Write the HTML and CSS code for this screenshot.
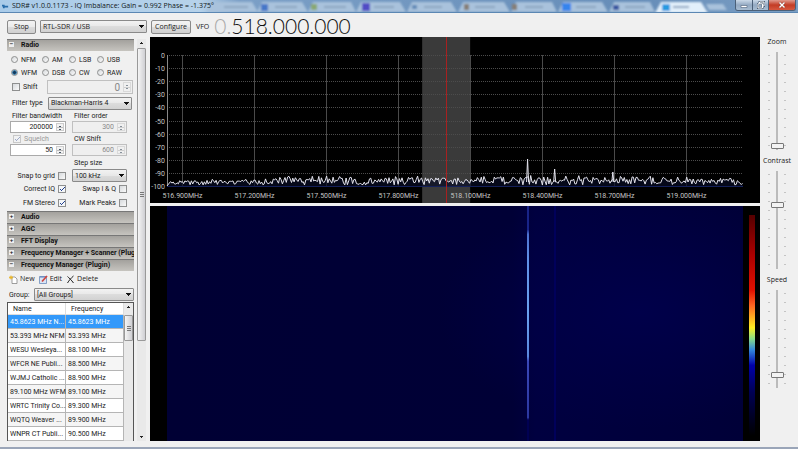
FILE: index.html
```html
<!DOCTYPE html>
<html lang="en">
<head>
<meta charset="utf-8">
<title>SDR#</title>
<link rel="stylesheet" href="styles.css">
</head>
<body>
<div class="app">
  <header class="titlebar">
    <svg class="tabs" viewBox="0 0 798 12" preserveAspectRatio="xMinYMin slice" aria-hidden="true">
      <defs><filter id="soft" x="-5%" y="-50%" width="110%" height="200%"><feGaussianBlur stdDeviation="1.3"/></filter></defs>
      <g filter="url(#soft)">
        <g fill="#a9c2dc">
          <path d="M206 12l6-10h40l6 10zM257 12l5-10h40l6 10zM308 12l5-10h38l5 10zM356 12l5-10h39l6 10zM407 12l5-10h39l6 10zM458 12l5-10h41l6 10zM511 12l5-10h36l5 10zM558 12l5-10h39l6 10zM609 12l5-10h36l5 10zM709 10l-3-6h17l4 6z"/>
        </g>
        <path fill="#e3f0fb" d="M655 13l6-11h40l7 11z"/>
        <path stroke="#8ba4c0" stroke-width="2" d="M224 7h24M275 7h22M324 7h22M374 7h20M424 7h18M475 7h20M525 7h18M576 7h20M625 7h20M673 7h16"/>
        <path fill="#4576c8" d="M261 4h7v7h-7z"/><path fill="#89a872" d="M311 4h6v6h-6z"/>
        <path fill="#514bc5" d="M362 3h8v8h-8z"/><path fill="#628ab7" d="M412 5h5v4h-5z"/>
        <path fill="#867e76" d="M464 4h5v6h-5zM512 4h5v6h-5z"/><path fill="#3684ed" d="M562 3h9v8h-9z"/>
        <path fill="#3957a0" d="M613 5h6v5h-6z"/><path fill="#279ae0" d="M662 4h8v7h-8z"/>
      </g>
    </svg>
    <svg class="logo" viewBox="0 0 8 8" aria-hidden="true"><path d="M0 2h3v1h4v2H3v1H1V4H0z" fill="#286dab"/></svg>
    <h1>SDR# v1.0.0.1173 - IQ Imbalance: Gain = 0.992 Phase = -1.375°</h1>
    <div class="winbtns">
      <button class="min" aria-label="Minimize"><svg viewBox="0 0 8 8"><path d="M1 4.500h6v2H1z" fill="#fff" stroke="#4c6078" stroke-width=".6"/></svg></button>
      <button class="max" aria-label="Restore"><svg viewBox="0 0 8 8"><path d="M2.500 2.500V1H7v4H5.500M1 2.800h4.500V7H1z" fill="none" stroke="#44566c" stroke-width="1.800"/><path d="M2.500 2.500V1H7v4H5.500M1 2.800h4.500V7H1z" fill="none" stroke="#fff"/></svg></button>
      <button class="close" aria-label="Close"><svg viewBox="0 0 8 8"><path d="M1.500 1.500l5 5M6.500 1.500l-5 5" stroke="#7c2419" stroke-width="2.400"/><path d="M1.500 1.500l5 5M6.500 1.500l-5 5" stroke="#fff" stroke-width="1.500"/></svg></button>
    </div>
  </header>

  <div class="toolbar">
    <button class="btn stop">Stop</button>
    <select class="source" aria-label="Source"><option>RTL-SDR / USB</option></select>
    <button class="btn configure">Configure</button>
    <span class="vfo-label">VFO</span>
    <output class="vfo"><span>0.</span>518.000.000</output>
  </div>

  <main class="main">
    <div class="side">
      <div class="panels">
        <h2 class="head"><button><i>−</i>Radio</button></h2>
        <form class="radio">
          <div class="modes">
            <label><input type="radio" name="mode">NFM</label><label><input type="radio" name="mode">AM</label><label><input type="radio" name="mode">LSB</label><label><input type="radio" name="mode">USB</label>
            <label><input type="radio" name="mode" checked>WFM</label><label><input type="radio" name="mode">DSB</label><label><input type="radio" name="mode">CW</label><label><input type="radio" name="mode">RAW</label>
          </div>
          <div class="line">
            <label class="shift"><input type="checkbox">Shift</label>
            <span class="spin big off"><input type="text" value="0" aria-label="Shift" disabled><b></b></span>
          </div>
          <div class="line">
            <label class="ftype" for="ftype">Filter type</label>
            <select id="ftype"><option>Blackman-Harris 4</option></select>
          </div>
          <div class="fields">
            <label for="bw">Filter bandwidth</label><label for="order">Filter order</label>
            <span class="spin"><input id="bw" type="text" value="200000"><b></b></span>
            <span class="spin off"><input id="order" type="text" value="300" disabled><b></b></span>
            <label class="squelch"><input type="checkbox" checked disabled>Squelch</label><label for="cw">CW Shift</label>
            <span class="spin"><input type="text" value="50" aria-label="Squelch level"><b></b></span>
            <span class="spin off"><input id="cw" type="text" value="600" disabled><b></b></span>
            <label class="step" for="step">Step size</label>
            <label class="check">Snap to grid<input type="checkbox"></label>
            <select id="step"><option>100 kHz</option></select>
            <label class="check">Correct IQ<input type="checkbox" checked></label><label class="check">Swap I &amp; Q<input type="checkbox"></label>
            <label class="check">FM Stereo<input type="checkbox" checked></label><label class="check">Mark Peaks<input type="checkbox"></label>
          </div>
        </form>
        <h2 class="head"><button><i>+</i>Audio</button></h2>
        <h2 class="head"><button><i>+</i>AGC</button></h2>
        <h2 class="head"><button><i>+</i>FFT Display</button></h2>
        <h2 class="head"><button><i>+</i>Frequency Manager + Scanner (Plug</button></h2>
        <h2 class="head"><button><i>−</i>Frequency Manager (Plugin)</button></h2>
        <div class="tools">
          <button><svg viewBox="0 0 9 9"><path d="M3 2h3l2 2v4.500H3z" fill="#fff" stroke="#777" stroke-width=".7"/><path d="M0 2.500h4M2 .5v4M.7 1l2.600 3M3.300 1L.7 4" stroke="#e9b62a" stroke-width=".9"/></svg>New</button>
          <button><svg viewBox="0 0 9 9"><path d="M.5 1.500h7v7h-7z" fill="#d9e5f5" stroke="#6b8cba" stroke-width=".8"/><path d="M1 2h6" stroke="#5a7fbd"/><path d="M3 6.500L8 1" stroke="#d0453e" stroke-width="1.700"/></svg>Edit</button>
          <button><svg viewBox="0 0 9 9"><path d="M1.500 1.500C3 3 5.500 5 7.500 8M7.500 1C5 3 3 5.500 1.500 8" fill="none" stroke="#222"/></svg>Delete</button>
        </div>
        <div class="group"><label for="grp">Group:</label><select id="grp"><option>[All Groups]</option></select></div>
        <div class="list">
          <table>
            <thead><tr><th>Name</th><th>Frequency</th></tr></thead>
            <tbody>
              <tr class="sel"><td>45.8623 MHz N...</td><td>45.8623 MHz</td></tr>
              <tr><td>53.393 MHz NFM</td><td>53.393 MHz</td></tr>
              <tr><td>WESU Wesleya...</td><td>88.100 MHz</td></tr>
              <tr><td>WFCR NE Publi...</td><td>88.500 MHz</td></tr>
              <tr><td>WJMJ Catholic ...</td><td>88.900 MHz</td></tr>
              <tr><td>89.100 MHz WFM</td><td>89.100 MHz</td></tr>
              <tr><td>WRTC Trinity Co...</td><td>89.300 MHz</td></tr>
              <tr><td>WQTQ Weaver ...</td><td>89.900 MHz</td></tr>
              <tr><td>WNPR CT Publi...</td><td>90.500 MHz</td></tr>
            </tbody>
          </table>
          <div class="bar short"><i class="up"></i><b></b></div>
        </div>
      </div>
      <div class="bar long"><i class="up"></i><b></b><i class="down"></i></div>
    </div>

    <div class="plots">
      <svg class="spectrum" id="spectrum"></svg>
      <div class="waterfall">
        <div class="fall"><i class="faint"></i><i class="signal"></i></div>
        <div class="scale"></div>
      </div>
    </div>

    <div class="sliders">
      <label for="zoom">Zoom</label><input id="zoom" type="range" min="0" max="100" value="1">
      <label for="contrast">Contrast</label><input id="contrast" type="range" min="0" max="100" value="66">
      <label for="speed">Speed</label><input id="speed" type="range" min="0" max="100" value="11">
    </div>
  </main>
  <footer class="edge"></footer>
</div>
<script src="script.js"></script>
</body>
</html>
```
FILE: styles.css
```css
* { box-sizing: border-box; }
body {
  margin: 0;
  background: #f0f0f0;
  color: #222;
  font: 7px/10px Roboto, "Liberation Sans", sans-serif;
}
button, input, select { font: inherit; color: inherit; margin: 0; }
button { padding: 0; border: 0; background: none; }
.app { min-height: 100vh; display: flex; flex-direction: column; }

.titlebar {
  position: relative;
  display: flex;
  align-items: center;
  gap: 3px;
  height: 13px;
  padding-left: 2px;
  border-bottom: 1px solid #5b87b3;
  background: linear-gradient(90deg, #a9cbe9 0, #b6d2ea 25%, #7b9fc6 30%, #668db8 80%, #7c9fc4);
  overflow: hidden;
}
.tabs { position: absolute; inset: 0; width: 100%; height: 100%; }
.logo { position: relative; width: 7px; height: 7px; }
.titlebar h1 { position: relative; margin: 0; flex: 1; font: 7px/12px "Open Sans", sans-serif; color: #101820; }
.winbtns { position: relative; display: flex; align-self: flex-start; margin-right: 2px; border: 1px solid #4b6078; border-top: 0; border-radius: 0 0 3px 3px; overflow: hidden; }
.winbtns button { width: 16px; height: 10px; display: flex; align-items: center; justify-content: center; background: linear-gradient(#cbd9e8, #93a9c2 50%, #a8bdd2); }
.winbtns button + button { border-left: 1px solid #4b6078; }
.winbtns .close { width: 27px; background: linear-gradient(#e09a8d, #c33c25 50%, #d6583f); }
.winbtns svg { width: 8px; height: 8px; }

.toolbar { display: flex; align-items: center; height: 24px; padding: 3px 7px 0; font: 7px/10px "Open Sans", sans-serif; }
.btn { height: 14px; border: 1px solid #8a8a8a; border-radius: 2px; background: linear-gradient(#f3f3f3, #ebebeb 50%, #dcdcdc 50%, #d0d0d0); }
.stop { width: 29px; }
.source { width: 107px; margin: 0 4px; }
.configure { width: 40px; }
.vfo-label { margin-left: 5px; }
.vfo { margin-left: 5px; padding-bottom: 2px; font: 300 21px/20px Lato, sans-serif; color: #111; }
.vfo span { color: #aaa; }

select {
  appearance: none;
  height: 13px;
  padding: 0 10px 0 2px;
  border: 1px solid #8a8a8a;
  border-radius: 1px;
  background:
    conic-gradient(from -45deg at 50% 100%, #111 90deg, transparent 0) right 2px center / 5px 3px no-repeat,
    linear-gradient(#f2f2f2, #e8e8e8 50%, #dcdcdc 50%, #d2d2d2);
}

.main { flex: 1; display: flex; }
.side { display: flex; width: 146px; padding: 2px 0 0 7px; gap: 3px; }
.panels { width: 127px; display: flex; flex-direction: column; }
.head { margin: 0; font: bold 7px/11px Roboto, "Liberation Sans", sans-serif; }
.head button { display: flex; width: 100%; height: 12px; align-items: center; overflow: hidden; white-space: nowrap; border-top: 1px solid #777; background: linear-gradient(#a3a19d, #c6c4bf); color: #111; }
.head i { flex: none; width: 5px; height: 5px; margin: 0 7px 3px 2px; background: #eee; font: bold 6px/5px "Liberation Sans", sans-serif; }

.radio { padding: 2px 1px 1px 3px; display: flex; flex-direction: column; }
.modes { display: grid; grid-template-columns: 31px 27px 28px 1fr; grid-auto-rows: 13px; padding-left: 1px; }
.radio label { display: flex; align-items: center; gap: 3px; white-space: nowrap; }
.radio input[type=radio], .radio input[type=checkbox] { appearance: none; flex: none; width: 8px; height: 8px; border: 1px solid #8e8f8f; background: linear-gradient(135deg, #d6d9dc, #fafafa); }
.radio input[type=radio] { width: 7px; height: 7px; border-radius: 50%; }
.radio input[type=radio]:checked { background: radial-gradient(#123a5e 0 1px, #3f82b0 2px, #dcebf5 3px); }
.radio input[type=checkbox]:checked {
  background:
    linear-gradient(45deg, transparent 35%, #23418f 35% 65%, transparent 65%) 1px 3px / 2px 2px no-repeat,
    linear-gradient(135deg, transparent 38%, #23418f 38% 62%, transparent 62%) 2px 1px / 4px 4px no-repeat,
    #f4f6f8;
}
.radio input[type=checkbox]:disabled { opacity: .4; }
.line { display: flex; align-items: center; height: 16px; }
.line .shift { width: 37px; padding-left: 2px; }
.line .ftype { width: 38px; padding-left: 2px; }
.line select { flex: 1; height: 13px; margin-right: 1px; }
.spin { display: flex; height: 12px; border: 1px solid #aaa; background: #fff; }
.spin input { flex: 1; min-width: 0; width: 10px; padding: 0 2px 0 0; border: 0; background: none; text-align: right; line-height: 10px; }
.spin b {
  width: 8px;
  margin: 1px;
  border: 1px solid #ccc;
  background:
    linear-gradient(#456, #456) center 2px / 2px 1px no-repeat,
    linear-gradient(#456, #456) center 5px / 2px 1px no-repeat,
    linear-gradient(#bbb, #bbb) center / 100% 1px no-repeat, #f2f2f2;
}
.spin.big { flex: 1; height: 14px; font-size: 10px; }
.spin.off { background: #efefef; border-color: #c0c0c0; color: #888; }
.spin.off b { opacity: .6; }
.fields { display: grid; grid-template-columns: 56px 55px; column-gap: 6px; grid-template-rows: 10px 12px 11px 12px 13px 13px 14px 14px; align-items: center; }
.fields > label:not(.check):not(.squelch) { padding-left: 2px; }
.fields .squelch { padding-left: 3px; color: #999; }
.fields .step { grid-column: 2; }
.fields .check { justify-content: flex-end; }

.tools { display: flex; gap: 4px; height: 16px; padding-left: 2px; font: 7px/10px "Open Sans", sans-serif; }
.tools button { display: flex; align-items: center; gap: 2px; }
.tools svg { width: 9px; height: 9px; }
.group { display: flex; align-items: center; justify-content: space-between; height: 15px; padding-left: 2px; }
.group select { width: 100px; }
.list { flex: 1 1 0; min-height: 130px; display: flex; align-items: flex-start; border: 1px solid #555; border-bottom: 0; background: #fff; overflow: hidden; }
.list table { flex: none; width: 116px; border-collapse: separate; border-spacing: 0; table-layout: fixed; }
th, td { padding: 0 0 0 2px; white-space: nowrap; text-align: left; font-weight: normal; height: 14px; border-right: 1px solid #b5b5b5; border-bottom: 1px solid #b5b5b5; }
th { height: 12px; padding-left: 5px; border-color: #ddd; }
tbody tr:nth-child(even) { background: #f5f5f5; }
tbody tr.sel { background: #3399fa; color: #fff; }

.bar { display: flex; flex-direction: column; align-self: stretch; width: 9px; background: #e9e9e9; }
.bar i { height: 9px; background: linear-gradient(#222, #222) center 4px / 3px 1px no-repeat, linear-gradient(#222, #222) center 3px / 1px 1px no-repeat; }
.bar .down { margin-top: auto; background: linear-gradient(#222, #222) center 4px / 3px 1px no-repeat, linear-gradient(#222, #222) center 5px / 1px 1px no-repeat; }
.bar b { border: 1px solid #999; border-radius: 1px; background: repeating-linear-gradient(#777 0 1px, transparent 1px 2px) center / 4px 5px no-repeat, linear-gradient(90deg, #f5f5f5, #cfcfd3); }
.bar.short i { height: 12px; }
.bar.short b { height: 26px; }
.bar.long b { flex: 0 0 73%; }

.plots { flex: 1; display: flex; flex-direction: column; gap: 3px; margin-left: 4px; min-width: 0; }
.spectrum { display: block; width: 100%; height: 166px; background: #000; font: 7px Roboto, "Liberation Sans", sans-serif; fill: #c4c4c4; }
.spectrum .grid { stroke: #4c4c4c; stroke-dasharray: 1 1; }
.spectrum .grid.v { stroke: #4a4a4a; stroke-dasharray: none; }
.spectrum .axis { stroke: #888; }
.spectrum .base { stroke: #14205a; }
.spectrum .band { fill: #3a3a3a; }
.spectrum .tune { stroke: #a82020; }
.spectrum .fill { fill: #070b24; fill-opacity: .7; }
.spectrum .trace { fill: none; stroke: #e4e4ee; }
.waterfall { flex: 1; display: flex; gap: 6px; padding: 0 5px 0 17px; background: #000; }
.fall { position: relative; flex: 1; background: radial-gradient(ellipse 35% 50% at 82% 45%, #00004a, transparent), linear-gradient(90deg, #000034, #000036 60%, #000040 64%, #000038); }
.fall i { position: absolute; top: 0; bottom: 0; width: 2px; }
.signal { left: 62.500%; background: linear-gradient(#182488 0 10%, #4c70d0 12%, #5f8fe8 22%, #6aa2f0 45%, #5a88df 64%, #3a48b8 66%, #2b37a0 90%, #000052 91%); }
.faint { left: 67.200%; background: #00005a; }
.scale { width: 6px; margin: 9px 0 5px; background: linear-gradient(#500 0, #a00 18%, #e01000 34%, #f62 41%, #fe2 51%, #8d8 56%, #38d 61%, #00a 68%, #005 80%, #000 100%); }

.sliders { width: 38px; display: flex; flex-direction: column; align-items: center; font: 7px/10px "Open Sans", sans-serif; padding-right: 4px; }
.sliders input {
  appearance: none;
  writing-mode: vertical-lr;
  direction: rtl;
  width: 18px;
  height: 98px;
  margin: 5px 0 6px;
  background:
    repeating-linear-gradient(#c4c4c4 0 1px, transparent 1px 9px) 0 3px / 2px 100% no-repeat,
    repeating-linear-gradient(#c4c4c4 0 1px, transparent 1px 9px) 100% 3px / 2px 100% no-repeat;
}
.sliders input::-webkit-slider-runnable-track { width: 18px; background: linear-gradient(#bbb, #bbb) center / 2px 100% no-repeat; }
.sliders input::-webkit-slider-thumb { appearance: none; width: 13px; height: 6px; margin-left: 3px; border: 1px solid #777; border-radius: 1px; background: #f3f3f3; }
.edge { height: 8px; border-bottom: 2px solid #9aa5b8; }
```
FILE: script.js
```js
const svg = document.getElementById("spectrum");

function noise(seed) {
  let s = seed;
  return () => (s = (s * 16807) % 2147483647) / 2147483647;
}

function draw() {
  const w = svg.clientWidth;
  const left = 17, right = w - 17, top = 18, bottom = 149;
  const span = right - left;
  const row = (bottom - top) / 10;
  const at = f => left + span * f;
  let out = `<rect class="band" x="${at(0.443)}" y="0" width="48" height="166"/>`;
  for (let i = 0; i <= 10; i++) {
    const y = Math.round(top + row * i) + 0.5;
    if (i < 10) out += `<path class="grid" d="M${left} ${y}H${right}"/>`;
    out += `<text x="15" y="${y + 2.5}" text-anchor="end">${i ? -i * 10 : 0}</text>`;
  }
  const labels = ["516.900", "517.200", "517.500", "517.800", "518.100", "518.400", "518.700", "519.000"];
  labels.forEach((t, i) => {
    const x = Math.round(at(0.026 + i * 0.125)) + 0.5;
    out += `<path class="grid v" d="M${x} ${top}V${bottom}"/><text x="${x}" y="161" text-anchor="middle">${t}MHz</text>`;
  });
  out += `<path class="axis" d="M${left + 0.5} ${top}V${bottom}"/><path class="base" d="M${left} ${bottom + 0.5}H${right}"/>`;

  const rnd = noise(4217);
  let pts = `${left},${bottom}`;
  for (let x = left + 1; x <= right; x += 1.3) {
    const f = (x - left) / span;
    const lift = f < 0.18 ? 5 : f > 0.92 ? 7 : 8;
    const y = bottom - 1 - rnd() * lift - (rnd() > 0.9 ? 2 : 0);
    pts += ` ${x.toFixed(1)},${y.toFixed(1)}`;
  }
  out += `<polygon class="fill" points="${pts} ${right},${bottom}"/>`;
  out += `<polyline class="trace" points="${pts}"/>`;
  [[0.626, 122], [0.673, 132], [0.774, 135]].forEach(([f, y]) => {
    out += `<path class="trace" d="M${at(f) - 1} ${bottom - 4}L${at(f)} ${y}L${at(f) + 1} ${bottom - 4}"/>`;
  });
  const tune = Math.round(at(0.484)) + 0.5;
  out += `<path class="tune" d="M${tune} 0V166"/>`;
  svg.innerHTML = out;
}

draw();
window.addEventListener("resize", draw);
```
